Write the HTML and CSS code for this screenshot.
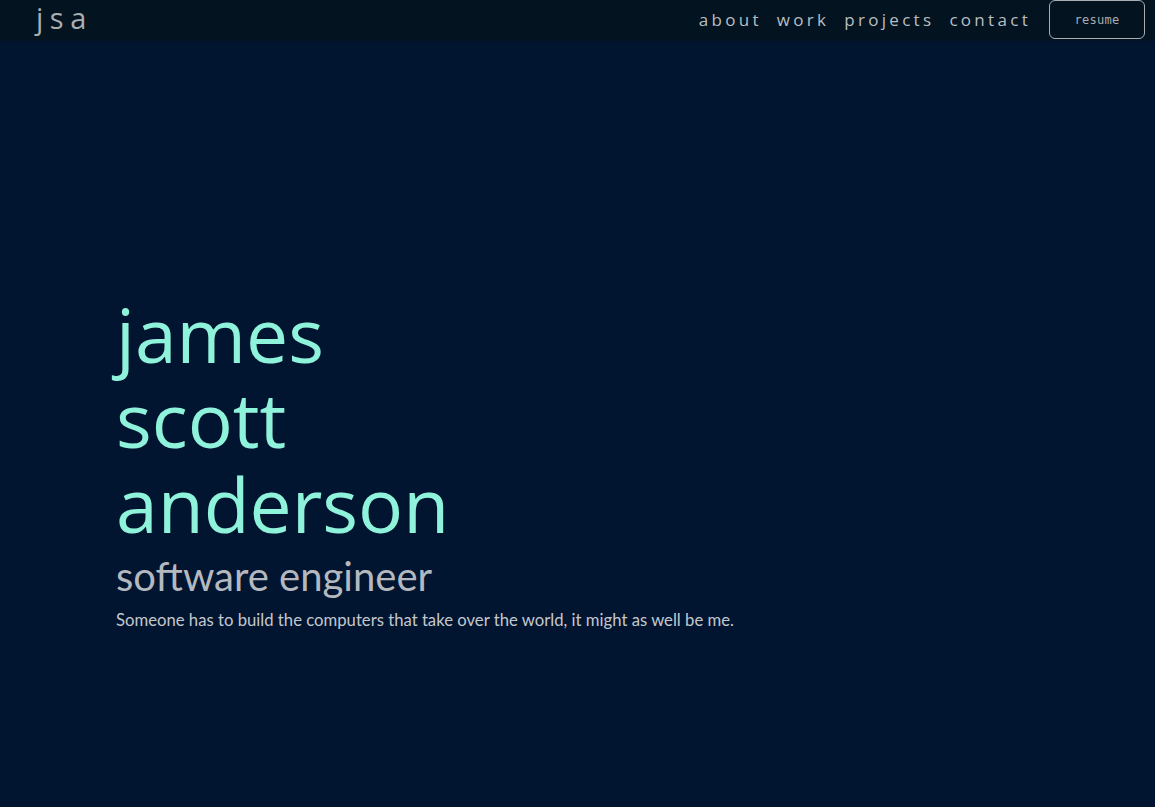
FILE: index.html
```html
<!DOCTYPE html>
<html lang="en">
<head>
<meta charset="utf-8">
<title>jsa</title>
<link rel="stylesheet" href="styles.css">
</head>
<body>
<header class="topbar">
  <a class="logo" href="#">jsa</a>
  <nav class="nav">
    <a href="#about">about</a>
    <a href="#work">work</a>
    <a href="#projects">projects</a>
    <a href="#contact">contact</a>
    <a class="resume" href="#resume">resume</a>
  </nav>
</header>
<main class="hero">
  <div class="intro">
    <h1 class="name">james<br>scott<br>anderson</h1>
    <h2 class="role">software engineer</h2>
    <p class="tagline">Someone has to build the computers that take over the world, it might as well be me.</p>
  </div>
</main>
</body>
</html>
```
FILE: styles.css
```css
* { box-sizing: border-box; }
html, body { margin: 0; height: 100%; }
body {
  background: #011430;
  color: #b4b9bf;
  font-family: "Open Sans", "Noto Sans", sans-serif;
  display: flex;
  flex-direction: column;
}
a { color: inherit; text-decoration: none; }
.topbar {
  height: 41px;
  background: #03131f;
  display: flex;
  align-items: center;
  justify-content: space-between;
  padding: 0 10px 0 36px;
}
.logo {
  font-family: "Open Sans", sans-serif;
  font-size: 29px;
  letter-spacing: 6.5px;
  color: #a9aeb3;
  line-height: 1;
  margin-top: -6px;
}
.nav {
  display: flex;
  align-items: center;
  gap: 15px;
  font-family: "Open Sans", sans-serif;
  font-size: 17px;
  letter-spacing: 3.3px;
  color: #b9bec3;
}
.nav a:not(.resume) { margin-top: -2px; }
.resume {
  margin-left: 3px;
  width: 96px;
  height: 39px;
  border: 1px solid #a9aeb3;
  border-radius: 6px;
  display: flex;
  align-items: center;
  justify-content: center;
  font-family: "DejaVu Sans Mono", monospace;
  font-size: 12px;
  letter-spacing: 0.3px;
  color: #a9aeb3;
  margin-top: -2px;
}
.hero {
  flex: 1;
  display: flex;
  align-items: flex-start;
  padding: 251px 116px 0;
}
.name {
  margin: 0;
  font-family: "Open Sans", sans-serif;
  font-weight: 400;
  font-size: 75px;
  line-height: 85px;
  color: #8ff3db;
  letter-spacing: 0;
}
.role {
  margin: 9px 0 0;
  font-family: Lato, sans-serif;
  font-weight: 400;
  font-size: 40px;
  line-height: 40px;
  color: #b4b9bf;
}
.tagline {
  margin: 14px 0 0;
  font-family: Lato, sans-serif;
  font-size: 16.7px;
  line-height: 20px;
  color: #c3c8cd;
}
```
